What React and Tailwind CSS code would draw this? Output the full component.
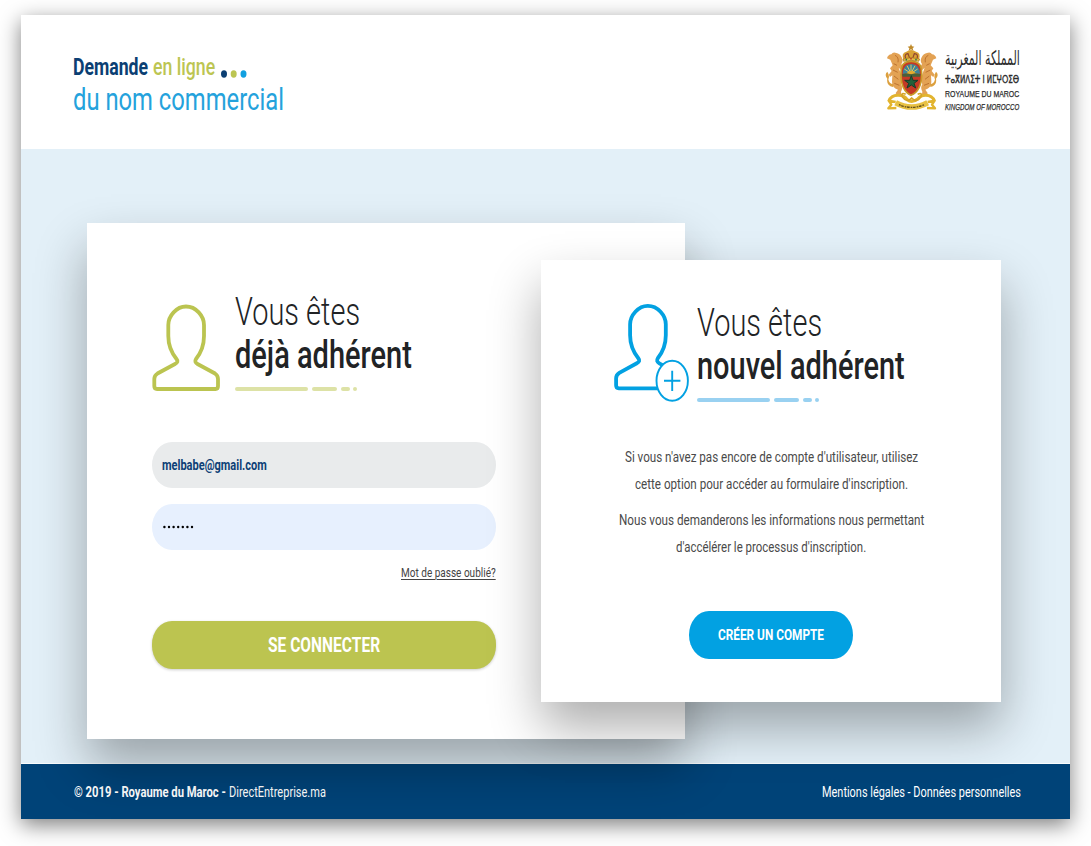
import { useLayoutEffect, useRef } from "react";

// Condenses a single line of text so that it fills the width of its box.
function Fit({ className = "", textClassName = "", children }) {
  const box = useRef(null);
  const text = useRef(null);
  useLayoutEffect(() => {
    const fit = () => {
      const ratio = box.current.clientWidth / text.current.offsetWidth;
      text.current.style.transform = `scaleX(${ratio})`;
    };
    fit();
    document.fonts?.ready.then(fit);
  }, []);
  return (
    <div ref={box} className={`shrink-0 whitespace-nowrap ${className}`}>
      <span ref={text} className={`inline-block origin-left ${textClassName}`}>
        {children}
      </span>
    </div>
  );
}

function Logo() {
  return (
    <div className="flex flex-col pt-[38px]">
      <div className="flex h-[29px] items-center text-[24px] leading-[29px]">
        <Fit className="w-[75px] font-bold text-[#0b3f73]">Demande</Fit>
        <Fit className="ml-[5px] w-[62px] font-medium text-[#bcc552]">en ligne</Fit>
        <svg className="mt-[12px] ml-[5px] h-2 w-7" viewBox="0 0 28 8">
          <ellipse cx="4" cy="4" rx="3" ry="3.7" fill="#0b3f73" />
          <ellipse cx="13.7" cy="4" rx="3" ry="3.7" fill="#bcc552" />
          <ellipse cx="23.5" cy="4" rx="3" ry="3.7" fill="#12a0e0" />
        </svg>
      </div>
      <Fit className="mt-[-1px] h-[36px] w-[211px] text-[32px] leading-[36px] text-[#24a2dc]">
        du nom commercial
      </Fit>
    </div>
  );
}

function Lion() {
  return (
    <g>
      <path
        d="M44 74 L34 70 Q37 59 47 58 Q52 49 62 54 Q72 55 78 67 Q84 78 77 87 L84 99 L77 106 L69 98 L76 118 Q82 136 76 148 Q83 158 76 170 L77 178 L63 184 L60 174 L67 164 Q49 158 49 140 L50 121 L43 126 L39 119 L48 108 L43 100 L51 91Z"
        fill="#e3a254"
      />
      <path d="M58 61 Q70 66 67 82 M54 86 L64 91 M52 105 L66 112 M55 123 L68 133 M56 145 L71 151" stroke="#bd7330" strokeWidth="3" fill="none" />
      <path d="M52 156 Q31 151 35 131 Q25 119 35 110 Q43 122 38 133 Q40 146 53 148" fill="#dca03e" />
    </g>
  );
}

function CoatOfArms() {
  return (
    <svg className="h-[73px] w-[54px]" viewBox="28 18 162 219">
      <Lion />
      <g transform="translate(216 0) scale(-1 1)">
        <Lion />
      </g>
      <g fill="none" stroke="#e2b42f" strokeLinejoin="round">
        <path d="M40 198 Q46 181 66 181 Q86 180 94 193 Q108 206 126 192 Q134 181 150 181 Q170 181 176 198" strokeWidth="9" />
        <path d="M60 203 Q108 229 156 203" strokeWidth="17" stroke="#e8c143" />
        <path d="M60 201 L39 197 L47 209 L38 220 L62 219 M156 201 L177 197 L169 209 L178 220 L154 219" strokeWidth="7" />
        <path d="M90 178 Q75 171 80 185 Q94 205 108 189 Q122 205 136 185 Q141 171 126 178" strokeWidth="5" stroke="#d4a42a" />
      </g>
      <path d="M70 209 Q108 225 146 209" stroke="#62501f" strokeWidth="4" strokeDasharray="5 2 8 3" fill="none" />
      <path
        d="M106 79 C132 79 138 92 138 118 C138 151 128 172 106 181 C86 172 76 151 76 118 C76 92 82 79 106 79Z"
        fill="#c53a26"
        stroke="#c99b28"
        strokeWidth="5"
      />
      <path d="M81 116 Q83 88 107 87 Q131 88 133 116Z" fill="#3c829a" />
      <path d="M106 115 V89 M106 115 L94 92 M106 115 L118 92 M106 115 L86 102 M106 115 L126 102" stroke="#d9c864" strokeWidth="3" />
      <path d="M89 118 Q106 97 125 118Z" fill="#e5ab2d" />
      <path d="M79 118 L93 115 L106 118 L119 115 L135 118 L133 125 H81Z" fill="#48613a" />
      <path d="M107 122 L112 136 L127 136 L115 145 L120 159 L107 150 L94 159 L99 145 L87 136 L102 136Z" fill="#24603a" stroke="#173c29" strokeWidth="3" />
      <path d="M84 76 Q75 53 92 50 Q106 40 121 50 Q138 53 129 76Z" fill="#d9a234" />
      <path d="M90 71 Q85 57 97 56 L102 70 M124 71 Q129 57 116 56 L111 70" fill="none" stroke="#8f4430" strokeWidth="3.5" />
      <path d="M82 72 Q106 64 132 72 L129 79 Q106 73 84 79Z" fill="#e7bd4a" stroke="#9e6e18" strokeWidth="2" />
      <circle cx="92" cy="74" r="2.5" fill="#287941" />
      <circle cx="106" cy="71" r="2.5" fill="#b42a22" />
      <circle cx="121" cy="74" r="2.5" fill="#287941" />
      <path d="M106 27 L109 34 L116 35 L111 40 L113 47 L106 43 L99 47 L101 40 L96 35 L103 34Z" fill="#c08b2b" />
    </svg>
  );
}

function Kingdom() {
  return (
    <div className="flex gap-[6px] pt-[26px]">
      <CoatOfArms />
      <div className="flex w-[75px] flex-col text-[#2d2d2d]">
        <Fit className="h-[32px] w-[75px] font-['DejaVu_Sans',sans-serif] text-[20px] leading-[34px]">
          <bdi dir="rtl">المملكة المغربية</bdi>
        </Fit>
        <Fit className="h-[14px] w-[74px] font-['DejaVu_Sans',sans-serif] text-[11px] leading-[13px] [-webkit-text-stroke:0.45px]">
          ⵜⴰⴳⵍⴷⵉⵜ ⵏ ⵍⵎⵖⵔⵉⴱ
        </Fit>
        <Fit className="mt-[1px] h-[13px] w-[74px] font-['Liberation_Sans',sans-serif] text-[9px] leading-[13px] [-webkit-text-stroke:0.25px]">
          ROYAUME DU MAROC
        </Fit>
        <Fit className="h-[13px] w-[74px] font-['Liberation_Sans',sans-serif] text-[9px] leading-[13px] italic [-webkit-text-stroke:0.25px]">
          KINGDOM OF MOROCCO
        </Fit>
      </div>
    </div>
  );
}

const PERSON =
  "M34 2.5C24.5 2.5 16.3 12 16.3 21V32C16.3 42 20.5 50 24.5 55Q27 58 23 60L5.5 69.5Q2.3 71.5 2.3 75V82Q2.3 85 5 85H63.5Q66 85 66 82V75Q66 71.5 63 69.5L45.5 60Q42 58 44 55C48 50 52 42 52 32V21C52 12 44 2.5 34 2.5Z";

function Dashes({ className }) {
  return (
    <div className={`flex h-1 ${className}`}>
      <i className="w-[73px] rounded-full bg-current" />
      <i className="ml-1 w-[25px] rounded-full bg-current" />
      <i className="ml-1 w-[9px] rounded-full bg-current" />
      <i className="ml-[3px] w-1 rounded-full bg-current" />
    </div>
  );
}

function MemberCard() {
  return (
    <section className="h-[516px] w-[598.5px] shrink-0 bg-white px-[65px] pt-[67px] shadow-[0_26px_48px_rgba(0,0,0,0.32)]">
      <div className="flex">
        <svg className="mt-[14px] h-[88px] w-[70px]" viewBox="0 0 70 88" fill="none">
          <path d={PERSON} stroke="#bbc450" strokeWidth="3.8" />
        </svg>
        <div className="ml-[13px] pt-px text-[38px] leading-[43px] text-[#212325]">
          <Fit className="h-[43px] w-[125px] font-light">Vous êtes</Fit>
          <Fit className="h-[43px] w-[177px] font-medium">déjà adhérent</Fit>
          <Dashes className="mt-[10px] text-[#dde2a6]" />
        </div>
      </div>
      <div className="mt-[50px] flex w-[344px] flex-col">
        <div className="flex h-[46px] items-center rounded-[20px/23px] bg-[#e9ebec] pl-[10px]">
          <Fit className="w-[105px] text-[15px] leading-5 font-bold text-[#0d3f76]">melbabe@gmail.com</Fit>
        </div>
        <div className="mt-4 flex h-[46px] items-center rounded-[20px/23px] bg-[#e7f0fe] pl-[10px]">
          <svg className="h-1 w-9" viewBox="0 0 36 4" fill="#000">
            {[2.4, 7, 11.6, 16.2, 20.8, 25.4, 30].map((x) => (
              <circle key={x} cx={x} cy="2" r="1.2" />
            ))}
          </svg>
        </div>
        <a className="mt-[12px] self-end text-[#444]">
          <Fit className="h-5 w-[95px] text-[13.5px] leading-5" textClassName="underline decoration-1 underline-offset-2">
            Mot de passe oublié?
          </Fit>
        </a>
        <button className="mt-[39px] flex h-[48px] items-center justify-center rounded-[20px/23px] bg-[#bcc450] text-white shadow-[0_1px_3px_rgba(0,0,0,0.2)]">
          <Fit className="w-[112px] text-[20px] leading-6 font-bold">SE CONNECTER</Fit>
        </button>
      </div>
    </section>
  );
}

function NewMemberCard() {
  return (
    <section className="mt-[37px] ml-[-144px] flex h-[442px] w-[460px] shrink-0 flex-col bg-white pt-[41px] shadow-[0_26px_48px_rgba(0,0,0,0.32)]">
      <div className="flex pl-[72px]">
        <svg className="mt-[2px] h-[102px] w-[78px]" viewBox="0 0 78 102" fill="none">
          <path d={PERSON} transform="translate(.8 .3)" stroke="#02a1e2" strokeWidth="3.8" />
          <ellipse cx="59.2" cy="77.8" rx="15.7" ry="20" fill="#fff" stroke="#02a1e2" strokeWidth="1.9" />
          <path d="M51 77.8H67.4M59.2 67.8V88" stroke="#02a1e2" strokeWidth="1.9" />
        </svg>
        <div className="ml-[6px] pt-px text-[38px] leading-[43px] text-[#212325]">
          <Fit className="h-[43px] w-[125px] font-light">Vous êtes</Fit>
          <Fit className="h-[43px] w-[208px] font-medium">nouvel adhérent</Fit>
          <Dashes className="mt-[10px] text-[#99d1f1]" />
        </div>
      </div>
      <div className="mt-[39px] flex flex-col items-center text-[15px] leading-[27px] text-[#4a4a4a]">
        <Fit className="h-[27px] w-[293px]">Si vous n'avez pas encore de compte d'utilisateur, utilisez</Fit>
        <Fit className="h-[27px] w-[273px]">cette option pour accéder au formulaire d'inscription.</Fit>
        <Fit className="mt-[9px] h-[27px] w-[305px]">Nous vous demanderons les informations nous permettant</Fit>
        <Fit className="h-[27px] w-[190px]">d'accélérer le processus d'inscription.</Fit>
      </div>
      <button className="mt-[50px] flex h-[48px] w-[164px] items-center justify-center self-center rounded-[20px/24px] bg-[#02a1e2] text-white">
        <Fit className="w-[106px] text-[15.5px] leading-5 font-bold">CRÉER UN COMPTE</Fit>
      </button>
    </section>
  );
}

export default function App() {
  return (
    <div className="h-[846px] w-[1091px] overflow-hidden bg-white pt-[15px] pl-[21px] font-[Roboto,sans-serif]">
      <div className="flex h-[804px] w-[1049px] flex-col shadow-[0_6px_20px_rgba(0,0,0,0.5)]">
        <header className="flex h-[134px] justify-between bg-white pr-[50px] pl-[52px]">
          <Logo />
          <Kingdom />
        </header>
        <main className="relative z-10 flex h-[615px] items-start border-b border-white/80 bg-[#e3f0f8] pt-[74px] pl-[65.5px]">
          <MemberCard />
          <NewMemberCard />
        </main>
        <footer className="flex h-[55px] items-center justify-between bg-[#004378] pr-[49px] pl-[53px] text-[15px] leading-5 text-white">
          <div className="flex gap-[3px]">
            <Fit className="w-[152px] font-bold">© 2019 - Royaume du Maroc -</Fit>
            <Fit className="w-[97px]">DirectEntreprise.ma</Fit>
          </div>
          <Fit className="w-[199px]">Mentions légales - Données personnelles</Fit>
        </footer>
      </div>
    </div>
  );
}
